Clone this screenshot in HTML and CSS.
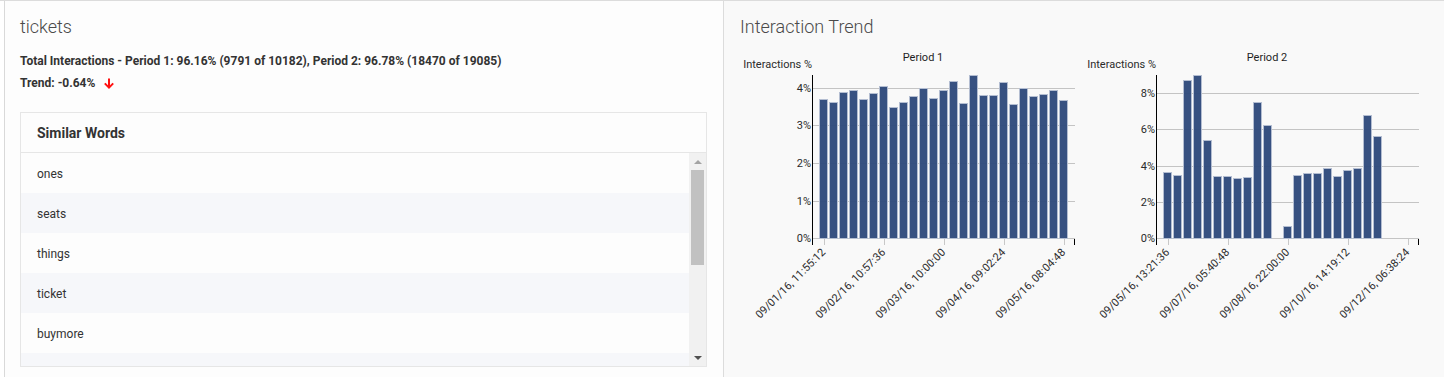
FILE: index.html
```html
<!DOCTYPE html>
<html>
<head>
<meta charset="utf-8">
<title>tickets</title>
<link rel="stylesheet" href="styles.css">
</head>
<body>
<div class="wrap">
  <section class="left">
    <h2 class="title">tickets</h2>
    <p class="stat first">Total Interactions - Period 1: 96.16% (9791 of 10182), Period 2: 96.78% (18470 of 19085)</p>
    <p class="stat">Trend: -0.64%<svg class="arrow" width="12" height="11" viewBox="0 0 12 11"><path d="M6 0.5 V9.5 M1.8 5.4 L6 9.6 L10.2 5.4" fill="none" stroke="#ff1010" stroke-width="2"/></svg></p>
    <div class="table">
      <div class="thead">Similar Words</div>
      <div class="tbody">
        <div class="rows">
          <div class="row">ones</div>
          <div class="row alt">seats</div>
          <div class="row">things</div>
          <div class="row alt">ticket</div>
          <div class="row">buymore</div>
          <div class="row alt"></div>
        </div>
        <div class="scrollbar">
          <div class="sb-btn"><span class="tri-up"></span></div>
          <div class="sb-thumb"></div>
          <div class="sb-btn sb-bottom"><span class="tri-down"></span></div>
        </div>
      </div>
    </div>
  </section>
  <section class="right">
    <h2 class="title">Interaction Trend</h2>
    <div class="charts">
      <svg class="chart" width="344" height="330" viewBox="0 0 344 330">
        <text class="ctitle" x="183" y="21" text-anchor="middle">Period 1</text>
        <text x="72" y="28" text-anchor="end">Interactions %</text>
        <g class="grid">
          <line x1="72" x2="335" y1="198.5" y2="198.5"/>
          <line x1="72" x2="335" y1="161.5" y2="161.5"/>
          <line x1="72" x2="335" y1="123.5" y2="123.5"/>
          <line x1="72" x2="335" y1="85.5" y2="85.5"/>
          <line x1="72" x2="335" y1="48.5" y2="48.5"/>
        </g>
        <g class="ylab" text-anchor="end">
          <text x="71" y="202">0%</text>
          <text x="71" y="165">1%</text>
          <text x="71" y="127">2%</text>
          <text x="71" y="89">3%</text>
          <text x="71" y="52">4%</text>
        </g>
        <g class="bars">
          <rect x="79.5" y="59.5" width="8" height="139"/>
          <rect x="89.5" y="62.5" width="8" height="136"/>
          <rect x="99.5" y="52.5" width="8" height="146"/>
          <rect x="109.5" y="50.5" width="8" height="148"/>
          <rect x="119.5" y="59.5" width="8" height="139"/>
          <rect x="129.5" y="53.5" width="8" height="145"/>
          <rect x="139.5" y="46.5" width="8" height="152"/>
          <rect x="149.5" y="67.5" width="8" height="131"/>
          <rect x="159.5" y="62.5" width="8" height="136"/>
          <rect x="169.5" y="56.5" width="8" height="142"/>
          <rect x="179.5" y="48.5" width="8" height="150"/>
          <rect x="189.5" y="58.5" width="8" height="140"/>
          <rect x="199.5" y="50.5" width="8" height="148"/>
          <rect x="209.5" y="41.5" width="8" height="157"/>
          <rect x="219.5" y="63.5" width="8" height="135"/>
          <rect x="229.5" y="35.5" width="8" height="163"/>
          <rect x="239.5" y="55.5" width="8" height="143"/>
          <rect x="249.5" y="55.5" width="8" height="143"/>
          <rect x="259.5" y="42.5" width="8" height="156"/>
          <rect x="269.5" y="64.5" width="8" height="134"/>
          <rect x="279.5" y="48.5" width="8" height="150"/>
          <rect x="289.5" y="56.5" width="8" height="142"/>
          <rect x="299.5" y="54.5" width="8" height="144"/>
          <rect x="309.5" y="50.5" width="8" height="148"/>
          <rect x="319.5" y="60.5" width="8" height="138"/>
        </g>
        <line class="axis" x1="72.5" x2="72.5" y1="35" y2="205"/>
        <line class="axis" x1="334.5" x2="334.5" y1="199" y2="205"/>
        <g class="ticks">
          <line x1="84.5" x2="84.5" y1="199" y2="205"/>
          <line x1="144.5" x2="144.5" y1="199" y2="205"/>
          <line x1="204.5" x2="204.5" y1="199" y2="205"/>
          <line x1="264.5" x2="264.5" y1="199" y2="205"/>
          <line x1="324.5" x2="324.5" y1="199" y2="205"/>
        </g>
        <g class="xlab" text-anchor="end">
          <text transform="translate(86 213) rotate(-45)">09/01/16, 11:55:12</text>
          <text transform="translate(146 213) rotate(-45)">09/02/16, 10:57:36</text>
          <text transform="translate(206 213) rotate(-45)">09/03/16, 10:00:00</text>
          <text transform="translate(266 213) rotate(-45)">09/04/16, 09:02:24</text>
          <text transform="translate(326 213) rotate(-45)">09/05/16, 08:04:48</text>
        </g>
      </svg>
      <svg class="chart" width="344" height="330" viewBox="0 0 344 330">
        <text class="ctitle" x="183" y="21" text-anchor="middle">Period 2</text>
        <text x="72" y="28" text-anchor="end">Interactions %</text>
        <g class="grid">
          <line x1="72" x2="335" y1="198.5" y2="198.5"/>
          <line x1="72" x2="335" y1="162.5" y2="162.5"/>
          <line x1="72" x2="335" y1="126.5" y2="126.5"/>
          <line x1="72" x2="335" y1="89.5" y2="89.5"/>
          <line x1="72" x2="335" y1="53.5" y2="53.5"/>
        </g>
        <g class="ylab" text-anchor="end">
          <text x="71" y="202">0%</text>
          <text x="71" y="166">2%</text>
          <text x="71" y="130">4%</text>
          <text x="71" y="93">6%</text>
          <text x="71" y="57">8%</text>
        </g>
        <g class="bars">
          <rect x="79.5" y="132.5" width="8" height="66"/>
          <rect x="89.5" y="135.5" width="8" height="63"/>
          <rect x="99.5" y="40.5" width="8" height="158"/>
          <rect x="109.5" y="35.5" width="8" height="163"/>
          <rect x="119.5" y="100.5" width="8" height="98"/>
          <rect x="129.5" y="136.5" width="8" height="62"/>
          <rect x="139.5" y="136.5" width="8" height="62"/>
          <rect x="149.5" y="138.5" width="8" height="60"/>
          <rect x="159.5" y="137.5" width="8" height="61"/>
          <rect x="169.5" y="62.5" width="8" height="136"/>
          <rect x="179.5" y="85.5" width="8" height="113"/>
          <rect x="199.5" y="186.5" width="8" height="12"/>
          <rect x="209.5" y="135.5" width="8" height="63"/>
          <rect x="219.5" y="133.5" width="8" height="65"/>
          <rect x="229.5" y="133.5" width="8" height="65"/>
          <rect x="239.5" y="128.5" width="8" height="70"/>
          <rect x="249.5" y="136.5" width="8" height="62"/>
          <rect x="259.5" y="130.5" width="8" height="68"/>
          <rect x="269.5" y="128.5" width="8" height="70"/>
          <rect x="279.5" y="75.5" width="8" height="123"/>
          <rect x="289.5" y="96.5" width="8" height="102"/>
        </g>
        <line class="axis" x1="72.5" x2="72.5" y1="35" y2="205"/>
        <line class="axis" x1="334.5" x2="334.5" y1="199" y2="205"/>
        <g class="ticks">
          <line x1="84.5" x2="84.5" y1="199" y2="205"/>
          <line x1="144.5" x2="144.5" y1="199" y2="205"/>
          <line x1="204.5" x2="204.5" y1="199" y2="205"/>
          <line x1="264.5" x2="264.5" y1="199" y2="205"/>
          <line x1="324.5" x2="324.5" y1="199" y2="205"/>
        </g>
        <g class="xlab" text-anchor="end">
          <text transform="translate(86 213) rotate(-45)">09/05/16, 13:21:36</text>
          <text transform="translate(146 213) rotate(-45)">09/07/16, 05:40:48</text>
          <text transform="translate(206 213) rotate(-45)">09/08/16, 22:00:00</text>
          <text transform="translate(266 213) rotate(-45)">09/10/16, 14:19:12</text>
          <text transform="translate(326 213) rotate(-45)">09/12/16, 06:38:24</text>
        </g>
      </svg>
    </div>
  </section>
</div>
</body>
</html>
```

FILE: styles.css
```css
html, body {
  margin: 0;
  padding: 0;
  background: #ffffff;
  font-family: Roboto, "Liberation Sans", Arial, sans-serif;
  color: #333333;
}

.wrap {
  display: flex;
  height: 377px;
  box-sizing: border-box;
  border-top: 1px solid #dcdcdc;
  overflow: hidden;
}

.left {
  margin-left: 4px;
  width: 720px;
  flex: none;
  box-sizing: border-box;
  border-left: 1px solid #d9d9d9;
  border-right: 1px solid #dcdcdc;
  background: #fdfdfd;
  padding: 14px 16px 0 15px;
}

.right {
  flex: 1;
  background: #f9f9f9;
  padding: 14px 0 0 16px;
}

.title {
  margin: 0;
  font-size: 18px;
  font-weight: 300;
  line-height: 24px;
  color: #4a4a4a;
}

.stat {
  margin: 0;
  font-size: 12px;
  font-weight: 700;
  line-height: 22px;
  color: #333333;
  display: flex;
  align-items: center;
}

.stat.first {
  margin-top: 11px;
}

.arrow {
  margin-left: 8px;
  margin-top: 1px;
}

.table {
  margin-top: 18px;
  height: 255px;
  box-sizing: border-box;
  border: 1px solid #e6e6e6;
  background: #fdfdfd;
  display: flex;
  flex-direction: column;
}

.thead {
  height: 39px;
  line-height: 41px;
  padding-left: 16px;
  font-size: 14px;
  font-weight: 700;
  color: #333333;
  border-bottom: 1px solid #e6e6e6;
  flex: none;
  overflow: hidden;
}

.tbody {
  flex: 1;
  display: flex;
  overflow: hidden;
}

.rows {
  flex: 1;
  overflow: hidden;
}

.row {
  height: 40px;
  line-height: 42px;
  padding-left: 16px;
  font-size: 12px;
  color: #333333;
  overflow: hidden;
}

.row.alt {
  background: #f6f7fa;
}

.scrollbar {
  width: 17px;
  flex: none;
  background: #f1f1f1;
  display: flex;
  flex-direction: column;
}

.sb-btn {
  height: 17px;
  display: flex;
  align-items: center;
  justify-content: center;
  flex: none;
}

.sb-bottom {
  margin-top: auto;
}

.tri-up {
  width: 0;
  height: 0;
  border-left: 4px solid transparent;
  border-right: 4px solid transparent;
  border-bottom: 4px solid #a3a3a3;
}

.tri-down {
  width: 0;
  height: 0;
  border-left: 4px solid transparent;
  border-right: 4px solid transparent;
  border-top: 4px solid #505050;
}

.sb-thumb {
  margin-left: 2px;
  width: 13px;
  height: 95px;
  background: #c1c1c1;
  flex: none;
}

.charts {
  display: flex;
  margin-top: 1px;
}

.chart {
  display: block;
  flex: none;
}

.chart text {
  font-family: Roboto, "Liberation Sans", Arial, sans-serif;
  font-size: 11px;
  fill: #2b2b2b;
}

.chart .ctitle {
  fill: #1f1f1f;
}

.grid line {
  stroke: #c4c4c4;
  stroke-width: 1;
}

.bars rect {
  fill: #2f4a7c;
  fill-opacity: 0.96;
  stroke: #b3bdd1;
  stroke-width: 1;
}

.axis {
  stroke: #000000;
  stroke-width: 1;
}

.ticks line {
  stroke: #c8c8c8;
  stroke-width: 1;
}
```
